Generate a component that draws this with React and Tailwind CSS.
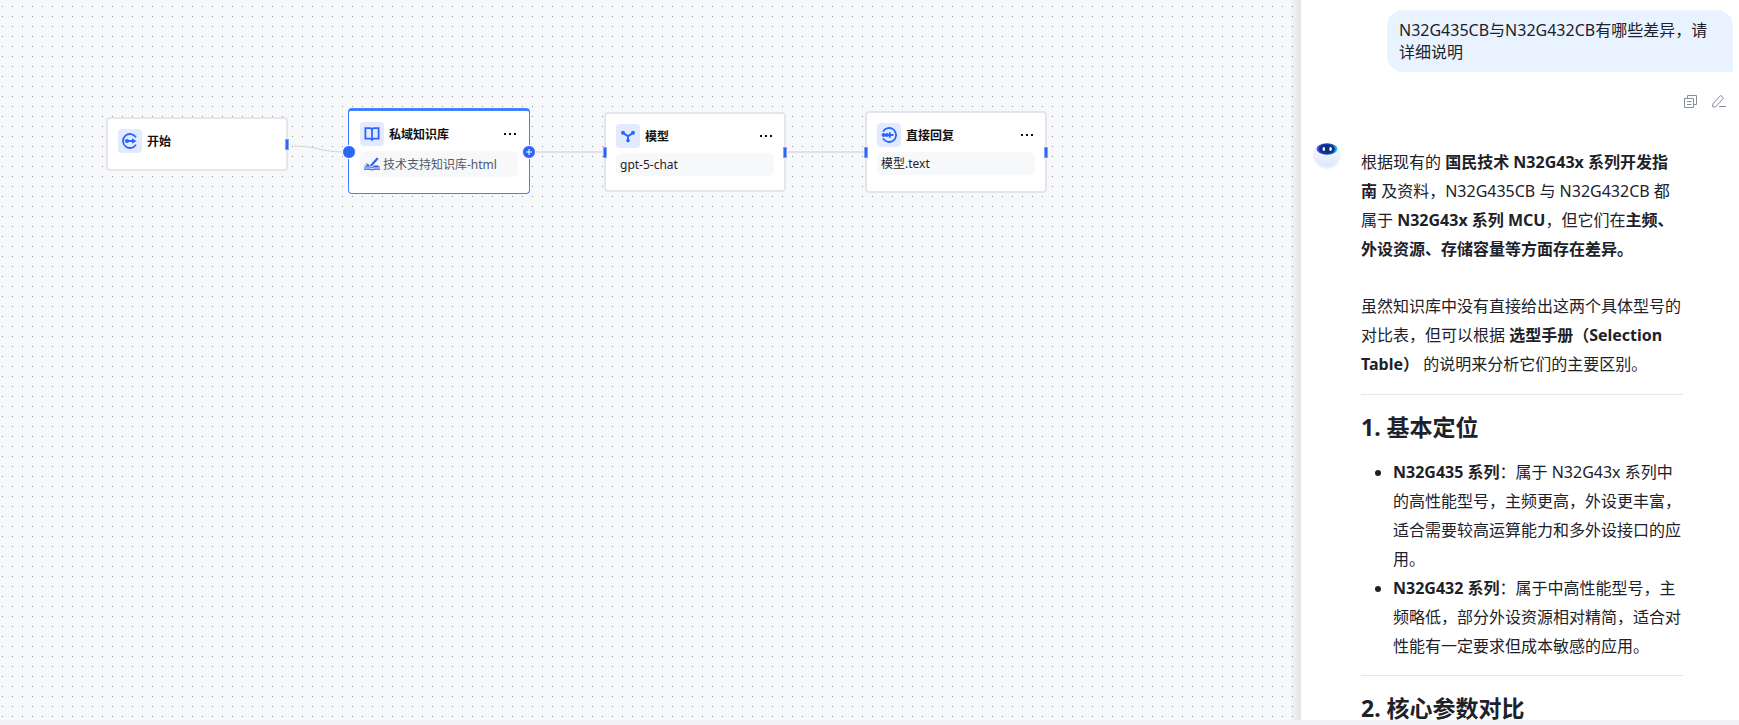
const StartIcon = () => (
  <svg className="w-4 h-4" viewBox="0 0 16 16" fill="none" stroke="#2b66f6" strokeWidth="1.8">
    <path d="M14 4.4A7 7 0 1 0 14 11.6" />
    <path d="M5 8h7" strokeWidth="2" />
    <circle cx="5" cy="8" r="2.1" fill="#2b66f6" stroke="none" />
    <path d="M10 5.2 14.4 8 10 10.8z" fill="#2b66f6" stroke="none" />
  </svg>
);

const BookIcon = () => (
  <svg className="w-4 h-4" viewBox="0 0 16 16" fill="none" stroke="#2b66f6" strokeWidth="1.8">
    <path d="M8 3.2C7.4 2.5 6.6 2.2 5.6 2.2H1.4v10.4h4.4c1 0 1.7.4 2.2 1.2.5-.8 1.2-1.2 2.2-1.2h4.4V2.2h-4.2c-1 0-1.8.3-2.4 1z" />
    <path d="M8 3.2v10.4" />
  </svg>
);

const ModelIcon = () => (
  <svg className="w-4 h-4" viewBox="0 0 16 16" fill="none" stroke="#2b66f6" strokeWidth="2">
    <path d="M3 5 8 8.2 13 5M8 8v5" />
    <g fill="#2b66f6" stroke="none">
      <circle cx="3" cy="4.7" r="2" />
      <circle cx="13" cy="4.7" r="2" />
      <circle cx="8" cy="12.6" r="1.8" />
    </g>
  </svg>
);

const ReplyIcon = () => (
  <svg className="w-4 h-4" viewBox="0 0 16 16" fill="none" stroke="#2b66f6" strokeWidth="1.8">
    <path d="M2 4.6a7 7 0 1 1 0 6.8" />
    <path d="M2 8h10.5M8.8 5.2v5.6" />
    <circle cx="2.6" cy="8" r="2" fill="#2b66f6" stroke="none" />
    <circle cx="6" cy="8" r="1.9" fill="#2b66f6" stroke="none" />
  </svg>
);

const KnowledgeIcon = () => (
  <svg className="w-4 h-4 shrink-0" viewBox="0 0 16 16" fill="#2b5cf0">
    <path d="M6.6 8.4 12.9 1.5l1.7 1.2L8.4 9.8l-2.4.8z" />
    <path d="M1.5 6.8 5.6 9l-.4 1.6H2L0 9.6h3.4zM10 9.4h4.6l-.5 1.2H16v1H9.4l-1.4.8-1.6-.8H0v-.8h6.8L8 11.4z" />
    <path d="M0 12.6h6l2 .8 2-.8h6v1.2h-5.6l-2.4.8-2.4-.8H0z" />
  </svg>
);

const MoreIcon = () => (
  <svg className="w-4 h-4" viewBox="0 0 16 16" fill="#111">
    <path d="M2 7h2v2H2zM7 7h2v2H7zM12 7h2v2h-2z" />
  </svg>
);

const CopyIcon = () => (
  <svg className="w-[14px] h-[14px]" viewBox="0 0 14 14" fill="none" stroke="#868d9b">
    <path d="M3.5 3.5v-3h9v9h-3" />
    <path d="M.5 3.5h9v9H.5zM3 6.5h4.5M3 9.5h4.5" />
  </svg>
);

const EditIcon = () => (
  <svg className="w-[14px] h-[14px]" viewBox="0 0 14 14" fill="none" stroke="#868d9b">
    <path d="M.8 12V9L7.8 1.2q1-1 2 0l.9.9q1 1 0 2L3.6 12zM7 11.5H14" />
  </svg>
);

const BotAvatar = () => (
  <svg className="w-8 h-8 shrink-0" viewBox="0 0 32 32">
    <defs>
      <linearGradient id="botBody" x1="0" y1="0" x2="0" y2="1">
        <stop offset="0" stopColor="#ffffff" />
        <stop offset="1" stopColor="#dce6fb" />
      </linearGradient>
      <linearGradient id="botFace" x1="0" y1="0" x2="1" y2="0">
        <stop offset="0" stopColor="#6a4df5" />
        <stop offset="0.25" stopColor="#1c3fb4" />
        <stop offset="0.75" stopColor="#1450b8" />
        <stop offset="1" stopColor="#1fe0f5" />
      </linearGradient>
    </defs>
    <circle cx="16" cy="17" r="14" fill="#f1f3f9" />
    <circle cx="16" cy="16" r="13" fill="url(#botBody)" />
    <ellipse cx="16" cy="11" rx="10.5" ry="5.8" fill="url(#botFace)" />
    <ellipse cx="16" cy="11" rx="8" ry="4.4" fill="#0c2f80" />
    <ellipse cx="12.8" cy="11" rx="1.3" ry="2" fill="#fff" />
    <ellipse cx="19.6" cy="11" rx="1.3" ry="2" fill="#fff" />
  </svg>
);

const nodes = [
  { id: "start", title: "开始", icon: StartIcon, place: "left-[106px] top-[117px] h-[54px]" },
  {
    id: "knowledge",
    title: "私域知识库",
    icon: BookIcon,
    place: "left-[348px] top-[108px] h-[86px]",
    selected: true,
    content: "技术支持知识库-html",
  },
  { id: "model", title: "模型", icon: ModelIcon, place: "left-[604px] top-[112px] h-[80px]", content: "gpt-5-chat" },
  { id: "reply", title: "直接回复", icon: ReplyIcon, place: "left-[865px] top-[111px] h-[82px]", content: "模型.text" },
];

function FlowNode({ node }) {
  const Icon = node.icon;
  return (
    <div
      className={`absolute w-[182px] rounded bg-white ${node.place} ${
        node.selected
          ? "border border-t-3 border-[#4080ff] px-[11px] pt-[11px]"
          : "border-2 border-[#e5e6eb] px-[10px] pt-[10px]"
      }`}
    >
      <div className="flex items-center">
        <span className="flex items-center justify-center w-6 h-6 rounded bg-[#e3eaff]">
          <Icon />
        </span>
        <h3 className="ml-[5px] pt-[2px] text-xs font-bold text-[#111]">{node.title}</h3>
        {node.content && (
          <button type="button" aria-label="更多" className="ml-auto">
            <MoreIcon />
          </button>
        )}
      </div>
      {node.content && (
        <div
          className={`flex items-center mt-[5px] px-1 rounded-md bg-[#f7f8fa] text-xs ${
            node.selected ? "h-[26px] gap-[3px] text-[#4e5969]" : "h-[23px] text-[#1d2129]"
          }`}
        >
          {node.selected && <KnowledgeIcon />}
          <span className="pt-px">{node.content}</span>
        </div>
      )}
    </div>
  );
}

function FlowCanvas() {
  return (
    <main className="relative flex-1 min-w-0 overflow-hidden bg-[#f7f8fa]">
      <svg className="absolute inset-0 w-full h-full">
        <defs>
          <pattern id="dots" width="10" height="10" patternUnits="userSpaceOnUse">
            <rect x="2" y="6" width="1" height="1" fill="#91929a" />
          </pattern>
        </defs>
        <rect width="100%" height="100%" fill="url(#dots)" />
        <g fill="none" stroke="#dfe1e8" strokeWidth="2">
          <path d="M294 146C318 146 320 152 344 152" strokeWidth="1" stroke="#d2d5dd" />
          <path d="M536 152H603M788 152H864" />
        </g>
      </svg>

      {nodes.map((node) => (
        <FlowNode key={node.id} node={node} />
      ))}

      {/* Connection ports */}
      <svg className="absolute inset-0 w-full h-full pointer-events-none">
        <g fill="#2b66f6" stroke="#7fa3f9" strokeWidth="1">
          <rect x="285.5" y="139.5" width="3" height="10" />
          <rect x="603.5" y="147.5" width="3" height="10" />
          <rect x="783.5" y="147.5" width="3" height="10" />
          <rect x="864.5" y="147.5" width="3" height="10" />
          <rect x="1044.5" y="147.5" width="3" height="10" />
        </g>
        <g fill="#2b66f6" stroke="#fff">
          <circle cx="349" cy="152" r="6.5" />
          <circle cx="529" cy="152" r="6.5" />
        </g>
        <path d="M526 152h6M529 149v6" stroke="#fff" />
      </svg>

      <div className="absolute inset-y-0 right-0 w-3 bg-linear-to-r from-transparent to-black/8" />
    </main>
  );
}

function ChatPanel() {
  return (
    <aside className="w-[438px] shrink-0 overflow-hidden bg-white pt-[10px] text-base text-[#1d2129]">
      <div className="flex flex-col items-end pr-[6px]">
        <p className="w-[346px] rounded-2xl rounded-br-none bg-[#e8f3ff] px-3 py-[9px] leading-[22px]">
          N32G435CB与N32G432CB有哪些差异，请详细说明
        </p>
        <div className="flex gap-[14px] mt-[23px] mr-[7px]">
          <button type="button" aria-label="复制">
            <CopyIcon />
          </button>
          <button type="button" aria-label="编辑">
            <EditIcon />
          </button>
        </div>
      </div>

      <div className="flex mt-[29px] pl-[10px]">
        <BotAvatar />
        <article className="w-[322px] ml-[18px] mt-[10px] leading-[29px]">
          <p>
            根据现有的 <strong>国民技术 N32G43x 系列开发指南</strong> 及资料，N32G435CB 与 N32G432CB 都属于{" "}
            <strong>N32G43x 系列 MCU</strong>，但它们在<strong>主频、外设资源、存储容量等方面存在差异。</strong>
          </p>
          <p className="mt-7">
            虽然知识库中没有直接给出这两个具体型号的对比表，但可以根据 <strong>选型手册（Selection Table）</strong>{" "}
            的说明来分析它们的主要区别。
          </p>
          <hr className="mt-[15px] border-[#e5e6e8]" />
          <h2 className="mt-4 text-[23px] leading-8 font-bold">1. 基本定位</h2>
          <ul className="mt-[15px] pl-8 list-disc">
            <li>
              <strong>N32G435 系列</strong>：属于 N32G43x 系列中的高性能型号，主频更高，外设更丰富，适合需要较高运算能力和多外设接口的应用。
            </li>
            <li>
              <strong>N32G432 系列</strong>：属于中高性能型号，主频略低，部分外设资源相对精简，适合对性能有一定要求但成本敏感的应用。
            </li>
          </ul>
          <hr className="mt-[14px] border-[#e5e6e8]" />
          <h2 className="mt-4 text-[23px] leading-8 font-bold">2. 核心参数对比</h2>
        </article>
      </div>
    </aside>
  );
}

export default function App() {
  return (
    <div className="flex flex-col h-screen bg-[#f0f0f5] font-['Noto_Sans','Noto_Sans_CJK_SC',sans-serif]">
      <div className="flex flex-1 min-h-0">
        <FlowCanvas />
        <ChatPanel />
      </div>
      <div className="h-[5px] shrink-0" />
    </div>
  );
}
